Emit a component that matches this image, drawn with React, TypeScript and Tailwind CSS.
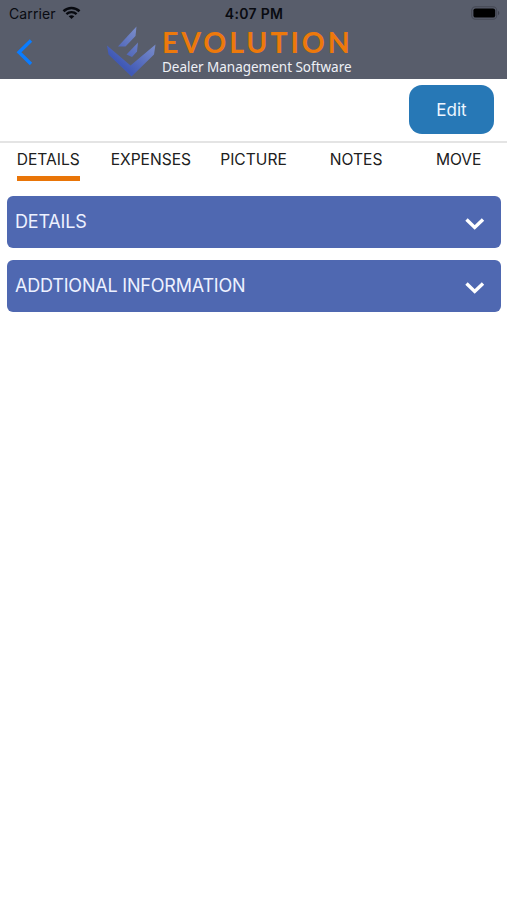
const tabs = ["DETAILS", "EXPENSES", "PICTURE", "NOTES", "MOVE"];

const panels = ["DETAILS", "ADDTIONAL INFORMATION"];

function WifiIcon() {
  return (
    <svg width="19" height="14" viewBox="0 0 18 14" fill="none" stroke="#080a10">
      <path d="M1 5.2C5.6.9 12.4.9 17 5.2" strokeWidth="2.6" />
      <path d="M3.9 8.2C6.8 5.4 11.2 5.4 14.1 8.2" strokeWidth="2.4" />
      <path d="M6.2 10.3C7.9 8.8 10.1 8.8 11.8 10.3L9 13.1Z" fill="#080a10" stroke="none" />
    </svg>
  );
}

function BatteryIcon() {
  return (
    <svg width="30" height="14" viewBox="0 0 30 14">
      <rect x="0.7" y="0.7" width="25" height="12.6" rx="3.8" fill="none" stroke="#444854" strokeWidth="1.1" />
      <rect x="2.4" y="2.4" width="21.8" height="9.2" rx="2.2" fill="#000" />
      <path d="M27 4.8c1.8.7 1.8 3.7 0 4.4Z" fill="#3c404c" />
    </svg>
  );
}

function LogoMark() {
  return (
    <svg width="49" height="52" viewBox="0 0 49 52">
      <defs>
        <linearGradient id="mark" gradientUnits="userSpaceOnUse" x1="16" y1="40" x2="38" y2="14">
          <stop offset="0" stopColor="#4059b6" />
          <stop offset="1" stopColor="#7689c8" />
        </linearGradient>
      </defs>
      <path d="M11 20.500 29.500 0.500 28.500 10 18.500 20.500Z" fill="url(#mark)" />
      <path d="M19.500 28.500 31 16.500 30 25.500 25 31Z" fill="url(#mark)" />
      <path d="M0 19.500 23.500 39.500 48.500 18.500 47 28.500 24.500 50.500 1.500 28.500Z" fill="url(#mark)" />
    </svg>
  );
}

function Chevron() {
  return (
    <svg width="20" height="14" viewBox="0 0 20 14" fill="none" stroke="#fff" strokeWidth="3.4" className="mt-[4px]">
      <path d="M1.500 2.500 9.700 10.500 18 2.500" />
    </svg>
  );
}

export default function App() {
  return (
    <div className="min-h-[900px] w-[507px] overflow-hidden bg-white font-['Inter',sans-serif]">
      <header className="h-[79px] bg-[#585d6b]">
        <div className="grid h-[26px] grid-cols-3 items-center pl-[9px] pr-[6px] text-[#090b11]">
          <div className="flex items-center gap-[6px]">
            <span className="pt-[1px] text-[14px] tracking-[0.1px]">Carrier</span>
            <WifiIcon />
          </div>
          <span className="pr-[2px] pt-[1px] text-center text-[14px] font-semibold tracking-[0.3px]">4:07 PM</span>
          <div className="flex justify-end">
            <BatteryIcon />
          </div>
        </div>
        <div className="flex h-[53px] items-start">
          <button aria-label="Back" className="ml-[16px] mt-[13px]">
            <svg width="18" height="27" viewBox="0 0 18 27" fill="none" stroke="#0a7cff" strokeWidth="3.4">
              <path d="M15 1.500 3 13.300 15 25" />
            </svg>
          </button>
          <div className="ml-[73px] flex">
            <LogoMark />
            <div className="ml-[6px] whitespace-nowrap">
              <div className="h-[33px] font-['Lato',sans-serif] text-[28.500px] font-bold leading-[32px] tracking-[2.900px] text-[#ed790b]">
                EVOLUTION
              </div>
              <div className="font-['Noto_Sans',sans-serif] text-[13.500px] leading-[17px] tracking-[-0.020px] text-[#eef0f6]">
                Dealer Management Software
              </div>
            </div>
          </div>
        </div>
      </header>

      <div className="flex h-[64px] justify-end border-b-2 border-[#e4e4e4] pr-[13px] pt-[6px]">
        <button className="h-[49px] w-[85px] rounded-[13px] bg-[#2778b6] pt-[2px] text-[17px] text-[#eef6ff]">
          Edit
        </button>
      </div>

      <nav className="-ml-[3px] -mr-[3px] grid h-[53px] grid-cols-5">
        {tabs.map((tab, i) => (
          <div key={tab} className="flex justify-center">
            <span
              className={`h-[38px] pt-[6px] text-[15.600px] leading-[22px] text-[#202020] ${
                i === 0 ? "border-b-[5px] border-[#e97508]" : ""
              }`}
            >
              {tab}
            </span>
          </div>
        ))}
      </nav>

      <main className="flex flex-col gap-[12px] pl-[7px] pr-[6px]">
        {panels.map((title) => (
          <section
            key={title}
            className="flex h-[52px] items-center justify-between rounded-[6px] bg-[#4f68b1] pb-px pl-[8px] pr-[16px]"
          >
            <h2 className="text-[18px] tracking-[-0.2px] text-[#edf1ff]">{title}</h2>
            <Chevron />
          </section>
        ))}
      </main>
    </div>
  );
}
